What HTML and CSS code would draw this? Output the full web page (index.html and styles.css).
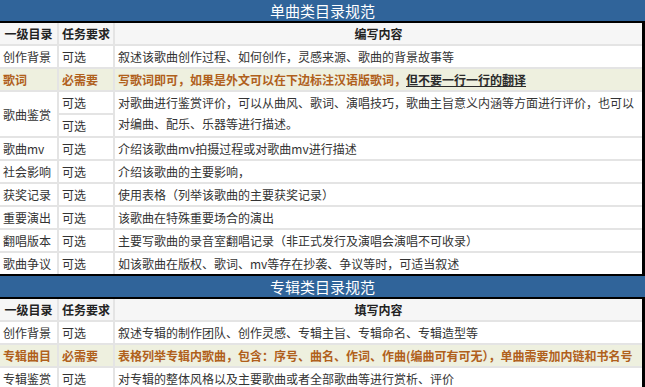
FILE: index.html
```html
<!DOCTYPE html>
<html lang="zh-CN">
<head>
<meta charset="utf-8">
<title>目录规范</title>
<link rel="stylesheet" href="styles.css">
</head>
<body>
<section class="block">
  <div class="title">单曲类目录规范</div>
  <div class="grid">
    <div class="cell head">一级目录</div>
    <div class="cell head">任务要求</div>
    <div class="cell head">编写内容</div>

    <div class="cell">创作背景</div>
    <div class="cell">可选</div>
    <div class="cell">叙述该歌曲创作过程、如何创作，灵感来源、歌曲的背景故事等</div>

    <div class="cell hl">歌词</div>
    <div class="cell hl">必需要</div>
    <div class="cell hl">写歌词即可，如果是外文可以在下边标注汉语版歌词，<u class="dark">但不要一行一行的翻译</u></div>

    <div class="cell span2 mid">歌曲鉴赏</div>
    <div class="cell">可选</div>
    <div class="cell span2">对歌曲进行鉴赏评价，可以从曲风、歌词、演唱技巧，歌曲主旨意义内涵等方面进行评价，也可以<br>对编曲、配乐、乐器等进行描述。</div>
    <div class="cell">可选</div>

    <div class="cell">歌曲mv</div>
    <div class="cell">可选</div>
    <div class="cell">介绍该歌曲mv拍摄过程或对歌曲mv进行描述</div>

    <div class="cell">社会影响</div>
    <div class="cell">可选</div>
    <div class="cell">介绍该歌曲的主要影响，</div>

    <div class="cell">获奖记录</div>
    <div class="cell">可选</div>
    <div class="cell">使用表格（列举该歌曲的主要获奖记录）</div>

    <div class="cell">重要演出</div>
    <div class="cell">可选</div>
    <div class="cell">该歌曲在特殊重要场合的演出</div>

    <div class="cell">翻唱版本</div>
    <div class="cell">可选</div>
    <div class="cell">主要写歌曲的录音室翻唱记录（非正式发行及演唱会演唱不可收录）</div>

    <div class="cell">歌曲争议</div>
    <div class="cell">可选</div>
    <div class="cell">如该歌曲在版权、歌词、mv等存在抄袭、争议等时，可适当叙述</div>
  </div>
</section>

<section class="block">
  <div class="title">专辑类目录规范</div>
  <div class="grid">
    <div class="cell head">一级目录</div>
    <div class="cell head">任务要求</div>
    <div class="cell head">填写内容</div>

    <div class="cell">创作背景</div>
    <div class="cell">可选</div>
    <div class="cell">叙述专辑的制作团队、创作灵感、专辑主旨、专辑命名、专辑造型等</div>

    <div class="cell hl">专辑曲目</div>
    <div class="cell hl">必需要</div>
    <div class="cell hl">表格列举专辑内歌曲，包含：序号、曲名、作词、作曲(编曲可有可无），单曲需要加内链和书名号</div>

    <div class="cell">专辑鉴赏</div>
    <div class="cell">可选</div>
    <div class="cell">对专辑的整体风格以及主要歌曲或者全部歌曲等进行赏析、评价</div>
  </div>
</section>
</body>
</html>
```

FILE: styles.css
```css
html, body {
  margin: 0;
  padding: 0;
  background: #ffffff;
}

body {
  width: 645px;
  height: 387px;
  overflow: hidden;
  font-family: "Noto Sans CJK SC", "Noto Sans", sans-serif;
  font-size: 12px;
  color: #333333;
}

.block {
  display: flex;
  flex-direction: column;
}

.title {
  height: 21px;
  line-height: 21px;
  background: #30649a;
  color: #ffffff;
  font-size: 15px;
  text-align: center;
}

.grid {
  display: grid;
  grid-template-columns: 57px 54px 1fr;
  grid-auto-rows: 21px;
  gap: 2px;
  background: #e4e4e4;
  border-top: 2px solid #000000;
  border-right: 3px solid #000000;
  border-bottom: 2px solid #000000;
}

.cell {
  background: #ffffff;
  line-height: 21px;
  padding: 0 2px 0 3px;
  white-space: nowrap;
  overflow: hidden;
}

.head {
  background: #f6f6f6;
  font-weight: bold;
  text-align: center;
  color: #222222;
  padding: 0;
}

.hl {
  background: #eef0df;
  color: #b0601c;
  font-weight: bold;
}

.dark {
  color: #2a2a2a;
}

.span2 {
  grid-row: span 2;
}

.mid {
  display: flex;
  align-items: center;
}
```
